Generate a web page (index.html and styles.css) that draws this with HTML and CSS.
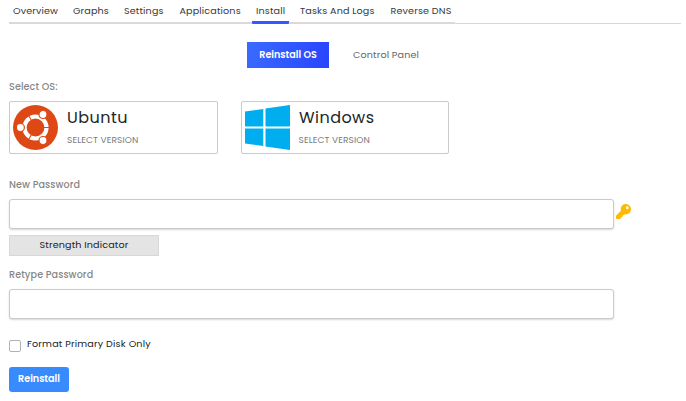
FILE: index.html
```html
<!DOCTYPE html>
<html lang="en">
<head>
<meta charset="utf-8">
<title>Install</title>
<link rel="stylesheet" href="styles.css">
</head>
<body>
<nav class="nav">
  <div class="tabs">
    <a class="tab overview"><span>Overview</span></a>
    <a class="tab graphs"><span>Graphs</span></a>
    <a class="tab settings"><span>Settings</span></a>
    <a class="tab applications"><span>Applications</span></a>
    <a class="tab install active"><span>Install</span></a>
    <a class="tab tasks"><span>Tasks And Logs</span></a>
    <a class="tab reverse"><span>Reverse DNS</span></a>
  </div>
</nav>
<main>
  <div class="modes">
    <a class="mode selected">Reinstall OS</a>
    <a class="mode">Control Panel</a>
  </div>
  <div class="label select-label">Select OS:</div>
  <div class="cards">
    <div class="card">
      <svg class="logo" viewBox="0 0 45 45">
        <circle cx="22.5" cy="22.5" r="22.5" fill="#dd4814"/>
        <circle cx="22.5" cy="22.5" r="11" fill="none" stroke="#fff" stroke-width="4.2"/>
        <path d="M31 22.5h6M18.5 15.57l-3.5-6.06M18.5 29.43l-3.5 6.06" stroke="#dd4814" stroke-width="1.1"/>
        <g fill="#fff" stroke="#dd4814" stroke-width="1.2">
          <circle cx="7.4" cy="22.5" r="4"/>
          <circle cx="30" cy="9.5" r="4"/>
          <circle cx="30" cy="35.5" r="4"/>
        </g>
      </svg>
      <div><h3 class="ubuntu">Ubuntu</h3><p>SELECT VERSION</p></div>
    </div>
    <div class="card windows-card">
      <svg class="logo" viewBox="0 0 45 45">
        <path fill="#00adef" d="M0 6.4 18.3 3.9V21.6H0zM20.5 3.5 45 0V21.4H20.5zM0 23.4H18.3V41.1L0 38.6zM20.5 23.6H45V45L20.5 41.5z"/>
      </svg>
      <div><h3 class="windows">Windows</h3><p>SELECT VERSION</p></div>
    </div>
  </div>
  <div class="label">New Password</div>
  <div class="field">
    <input type="password" aria-label="New Password">
    <svg class="key" viewBox="0 0 512 512"><path fill="#ffb900" d="M512 176c0 97-79 176-176 176-11 0-22-1-33-3l-24 27a24 24 0 0 1-18 8h-37v40a24 24 0 0 1-24 24h-40v40a24 24 0 0 1-24 24H24a24 24 0 0 1-24-24v-78a24 24 0 0 1 7-17l162-162A176 176 0 1 1 512 176zM336 128a48 48 0 1 0 96 0 48 48 0 1 0-96 0z"/></svg>
  </div>
  <div class="strength">Strength Indicator</div>
  <div class="label retype">Retype Password</div>
  <div class="field"><input type="password" aria-label="Retype Password"></div>
  <label class="format"><input type="checkbox"><span>Format Primary Disk Only</span></label>
  <button class="submit">Reinstall</button>
</main>
</body>
</html>
```
FILE: styles.css
```css
* { box-sizing: border-box; }
body {
  margin: 0;
  padding: 0 5px 0 9px;
  background: #fff;
  color: #212529;
  font: 9.6px/15px Poppins, Inter, sans-serif;
  letter-spacing: .14px;
}
.nav { height: 24px; border-bottom: 1px solid #d8d8d8; }
.tabs {
  display: flex;
  width: 446px;
  height: 24px;
  border-bottom: 2px solid #dcd8da;
}
.tab {
  height: 24px;
  padding: 3px 0 0 4px;
  white-space: nowrap;
  color: #343a40;
}
.overview { width: 60px; }
.graphs { width: 51px; }
.settings { width: 55.5px; }
.applications { width: 67.5px; }
.install { width: 37px; margin-right: 7px; }
.applications + .install { margin-left: 9px; }
.tasks { width: 90.5px; }
.reverse { width: 68px; }
.active { border-bottom: 3px solid #3358ff; border-radius: 1px; }
.modes { display: flex; margin: 18px 0 0 238px; }
.mode {
  width: 82px;
  height: 26px;
  margin-right: 16px;
  padding-top: 5px;
  text-align: center;
  white-space: nowrap;
  color: #666;
}
.mode.selected { background: linear-gradient(100deg, #3a6bff, #2944ff); color: #fff; font-weight: 600; letter-spacing: 0; }
.label { height: 15px; color: #868686; font-weight: 500; letter-spacing: .1px; }
.select-label { margin-top: 11px; }
.cards { display: flex; gap: 23px; margin: 7px 0 23px; }
.card {
  display: flex;
  width: 209px;
  height: 53px;
  padding: 3px;
  border: 1px solid #c8cacb;
  border-radius: 2px;
}
.windows-card { width: 208px; }
.logo { width: 45px; height: 45px; margin-right: 9px; flex: none; }
h3 { margin: 2px 0 0; font-size: 16px; line-height: 21px; font-weight: 400; letter-spacing: .45px; }
p { margin: 5px 0 0; font-size: 9px; line-height: 14px; color: #7c7c7c; letter-spacing: .13px; white-space: nowrap; }
.windows + p { margin-left: -.5px; }
.field { display: flex; margin-top: 7px; gap: 2px; }
.field input {
  width: 605px;
  height: 30px;
  padding: 0 8px;
  border: 1px solid #c8cacb;
  border-radius: 3px;
  box-shadow: 0 1px 2px rgba(0, 0, 0, .16);
  outline: 0;
  background: #fff;
}
.key { width: 15px; height: 15px; margin-top: 5px; }
.strength {
  width: 150px;
  height: 21px;
  margin: 6px 0 11px;
  border: 1px solid #d8d8d8;
  background: #e4e4e4;
  line-height: 18px;
  text-align: center;
}
.format { display: flex; gap: 6px; margin-top: 17px; height: 16px; letter-spacing: .18px; }
.format input {
  appearance: none;
  width: 12px;
  height: 12px;
  margin: 4px 0 0;
  border: 1px solid #a9b4be;
  border-radius: 2px;
}
.submit {
  width: 60px;
  height: 25px;
  margin-top: 15px;
  padding: 0 0 2px;
  border: 0;
  border-radius: 3px;
  background: #388bfd;
  color: #fff;
  font: 600 9.6px/15px Poppins, Inter, sans-serif;
}
```
